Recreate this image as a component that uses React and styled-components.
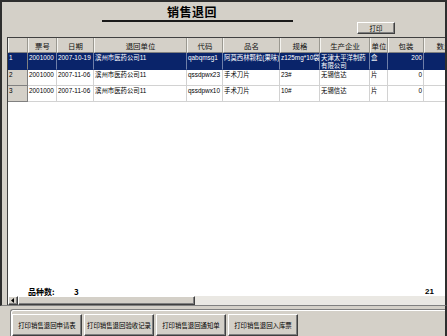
import styled, { createGlobalStyle } from "styled-components";

const GlobalStyle = createGlobalStyle`
  html, body {
    margin: 0;
    padding: 0;
    background: #d4d0c8;
  }
  body {
    font-family: "Liberation Sans", "Noto Sans CJK SC", sans-serif;
    color: #000;
  }
`;

const cols = [
  { w: 20 },
  { w: 29, title: "票号" },
  { w: 37, title: "日期" },
  { w: 93, title: "退回单位" },
  { w: 36, title: "代码" },
  { w: 57, title: "品名" },
  { w: 40, title: "规格" },
  { w: 50, title: "生产企业", wrap: true },
  { w: 18, title: "单位" },
  { w: 36, title: "包装", right: true },
  { w: 40, title: "数量", right: true },
];

const rows = [
  {
    no: "1",
    cells: ["2001000", "2007-10-19", "滨州市医药公司11", "qabqmsg1", "阿莫西林颗粒(果味)", "z125mg*10袋", "天津太平洋制药有限公司", "盒", "200", "1"],
    selected: true,
  },
  {
    no: "2",
    cells: ["2001000", "2007-11-06", "滨州市医药公司11", "qssdpwx23", "手术刀片", "23#", "无锡信达", "片", "0", ""],
  },
  {
    no: "3",
    cells: ["2001000", "2007-11-06", "滨州市医药公司11", "qssdpwx10", "手术刀片", "10#", "无锡信达", "片", "0", ""],
  },
];

const buttons = [
  "打印销售退回申请表",
  "打印销售退回验收记录",
  "打印销售退回通知单",
  "打印销售退回入库票",
];

const Window = styled.div`
  width: 447px;
  height: 336px;
  overflow: hidden;
  background: #d4d0c8;
  display: flex;
  flex-direction: column;
`;

const MainPanel = styled.div`
  height: 311px;
  box-sizing: border-box;
  border: 2px solid #2e2e2e;
  border-bottom: 1px solid #808080;
  display: flex;
  flex-direction: column;
`;

const Header = styled.div`
  height: 35px;
  flex-shrink: 0;
  display: flex;
  align-items: flex-start;
`;

const Title = styled.div`
  margin-left: 100px;
  width: 191px;
  box-sizing: border-box;
  padding: 3px 11px 2px 0;
  border-bottom: 2px solid #1a1a1a;
  text-align: center;
  font-family: "Noto Sans CJK SC", sans-serif;
  font-size: 12px;
  font-weight: 700;
  line-height: 13px;
  letter-spacing: 0.5px;
`;

const RaisedButton = styled.div`
  box-sizing: border-box;
  background: #d4d0c8;
  border: 1px solid;
  border-color: #ffffff #404040 #404040 #ffffff;
  box-shadow: inset -1px -1px 0 #808080;
  display: flex;
  align-items: center;
  justify-content: center;
  font-family: "Noto Sans CJK SC", sans-serif;
  font-size: 6.4px;
  white-space: nowrap;
  flex-shrink: 0;
`;

const PrintButton = styled(RaisedButton)`
  margin-left: 64px;
  margin-top: 20px;
  width: 38px;
  height: 12px;
`;

const GridPanel = styled.div`
  flex: 1;
  margin-left: 5px;
  border-left: 1px solid #404040;
  border-top: 1px solid #404040;
  background: #ffffff;
  display: flex;
  flex-direction: column;
  overflow: hidden;
  min-height: 0;
`;

const Row = styled.div`
  display: flex;
  flex-shrink: 0;
  min-height: ${(p) => (p.$head ? 15 : 16)}px;
`;

const HeadCell = styled.div`
  width: ${(p) => p.$w}px;
  flex-shrink: 0;
  box-sizing: border-box;
  background: #d4d0c8;
  border-right: 1px solid #9a9890;
  border-bottom: 1px solid #808080;
  border-left: 1px solid #f4f3ef;
  display: flex;
  align-items: center;
  justify-content: center;
  font-family: "Noto Sans CJK SC", sans-serif;
  font-size: 7.4px;
  color: #111;
`;

const Cell = styled.div`
  width: ${(p) => p.$w}px;
  flex-shrink: 0;
  box-sizing: border-box;
  padding: 1px 1px 0;
  overflow: hidden;
  font-size: 6.4px;
  line-height: 7.5px;
  white-space: ${(p) => (p.$wrap ? "normal" : "nowrap")};
  text-align: ${(p) => (p.$right ? "right" : "left")};
  background: ${(p) => (p.$sel ? "#0a246a" : "#ffffff")};
  color: ${(p) => (p.$sel ? "#ffffff" : "#000000")};
  border-right: 1px solid ${(p) => (p.$sel ? "#6f7fa8" : "#d2d2d2")};
  border-bottom: 1px solid ${(p) => (p.$sel ? "#0a246a" : "#d2d2d2")};
  word-break: break-all;
`;

const IndicatorCell = styled(Cell)`
  background: ${(p) => (p.$sel ? "#0a246a" : "#d4d0c8")};
  border-right: 1px solid #808080;
  border-bottom: 1px solid ${(p) => (p.$sel ? "#0a246a" : "#808080")};
`;

const Spacer = styled.div`
  flex: 1;
`;

const Footer = styled.div`
  height: 10px;
  flex-shrink: 0;
  display: flex;
  align-items: center;
  padding: 0 11px 0 20px;
  font-family: "Noto Sans CJK SC", sans-serif;
  font-size: 8px;
  font-weight: 700;
`;

const FooterLabel = styled.span`
  width: 46px;
`;

const FooterTotal = styled.span`
  margin-left: auto;
  font-family: "Liberation Sans", sans-serif;
`;

const ScrollBar = styled.div`
  height: 9px;
  flex-shrink: 0;
  display: flex;
  background: #eae8e3;
`;

const ArrowButton = styled(RaisedButton)`
  width: 10px;
  height: 9px;
`;

const Thumb = styled(RaisedButton)`
  width: 177px;
  height: 9px;
`;

const BottomPanel = styled.div`
  flex: 1;
  border-right: 2px solid #2e2e2e;
  padding: 3px 0 0 10px;
`;

const GroupBox = styled.div`
  border-top: 1px solid #808080;
  border-left: 1px solid #808080;
  box-shadow: inset 1px 1px 0 #ffffff;
  border-top-left-radius: 3px;
  padding: 4px 0 0 1px;
  display: flex;
  gap: 2px;
`;

const ActionButton = styled(RaisedButton)`
  width: 70px;
  height: 22px;
`;

export default function App() {
  return (
    <>
      <GlobalStyle />
      <Window>
        <MainPanel>
          <Header>
            <Title>销售退回</Title>
            <PrintButton>打印</PrintButton>
          </Header>
          <GridPanel>
            <Row $head>
              {cols.map((c, i) => (
                <HeadCell key={i} $w={c.w}>
                  {c.title}
                </HeadCell>
              ))}
            </Row>
            {rows.map((r) => (
              <Row key={r.no}>
                <IndicatorCell $w={cols[0].w} $sel={r.selected}>
                  {r.no}
                </IndicatorCell>
                {r.cells.map((v, i) => (
                  <Cell
                    key={i}
                    $w={cols[i + 1].w}
                    $right={cols[i + 1].right}
                    $wrap={cols[i + 1].wrap}
                    $sel={r.selected}
                  >
                    {v}
                  </Cell>
                ))}
              </Row>
            ))}
            <Spacer />
            <Footer>
              <FooterLabel>品种数:</FooterLabel>
              <span>3</span>
              <FooterTotal>21</FooterTotal>
            </Footer>
            <ScrollBar>
              <ArrowButton>
                <svg width="4" height="5" viewBox="0 0 4 5">
                  <path d="M3 0 L0 2.5 L3 5 Z" fill="#000" />
                </svg>
              </ArrowButton>
              <Thumb />
            </ScrollBar>
          </GridPanel>
        </MainPanel>
        <BottomPanel>
          <GroupBox>
            {buttons.map((b) => (
              <ActionButton key={b}>{b}</ActionButton>
            ))}
          </GroupBox>
        </BottomPanel>
      </Window>
    </>
  );
}
